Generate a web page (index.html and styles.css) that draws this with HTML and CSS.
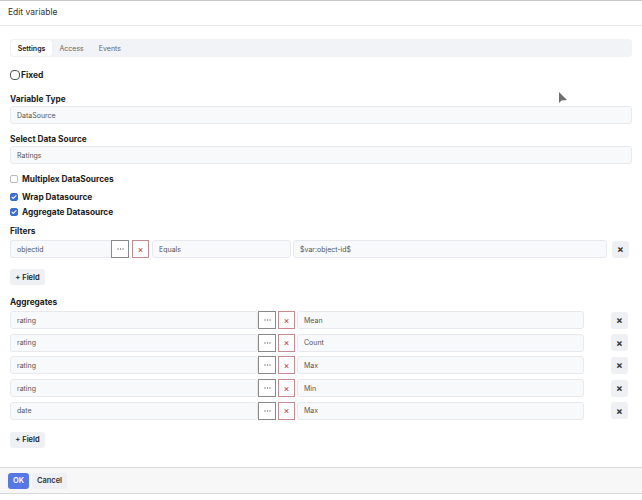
FILE: index.html
```html
<!DOCTYPE html>
<html>
<head>
<meta charset="utf-8">
<link rel="stylesheet" href="styles.css">
</head>
<body>
<div class="dialog">
  <div class="header">Edit variable</div>
  <div class="content">
    <div class="tabs">
      <div class="tab active">Settings</div>
      <div class="tab">Access</div>
      <div class="tab">Events</div>
    </div>
    <label class="fixed"><span class="radio"></span>Fixed</label>
    <div class="label l-type">Variable Type</div>
    <div class="input">DataSource</div>
    <div class="label l-src">Select Data Source</div>
    <div class="input">Ratings</div>
    <div class="check c-multi"><span class="box"></span>Multiplex DataSources</div>
    <div class="check c-wrap"><span class="box on"><svg viewBox="0 0 8 8" width="8" height="8"><path d="M2 4.2 L3.4 5.5 L6 2.6" fill="none" stroke="#fff" stroke-width="1.1" stroke-linecap="round" stroke-linejoin="round"/></svg></span>Wrap Datasource</div>
    <div class="check c-agg"><span class="box on"><svg viewBox="0 0 8 8" width="8" height="8"><path d="M2 4.2 L3.4 5.5 L6 2.6" fill="none" stroke="#fff" stroke-width="1.1" stroke-linecap="round" stroke-linejoin="round"/></svg></span>Aggregate Datasource</div>
    <div class="label l-filters">Filters</div>
    <div class="row filter-row">
      <div class="input w-f1">objectid</div>
      <div class="dots"><svg width="7" height="2" viewBox="0 0 7 2"><circle cx="1" cy="1" r="0.7" fill="#666"/><circle cx="3.5" cy="1" r="0.7" fill="#666"/><circle cx="6" cy="1" r="0.7" fill="#666"/></svg></div>
      <div class="xbtn">×</div>
      <div class="input w-f2">Equals</div>
      <div class="input w-f3">$var:object-id$</div>
      <div class="close">×</div>
    </div>
    <div class="addbtn a1">+ Field</div>
    <div class="label l-aggs">Aggregates</div>
    <div class="aggs">
      <div class="row agg-row">
        <div class="input w-a1">rating</div><div class="dots"><svg width="7" height="2" viewBox="0 0 7 2"><circle cx="1" cy="1" r="0.7" fill="#666"/><circle cx="3.5" cy="1" r="0.7" fill="#666"/><circle cx="6" cy="1" r="0.7" fill="#666"/></svg></div><div class="xbtn">×</div><div class="input w-a2">Mean</div><div class="close">×</div>
      </div>
      <div class="row agg-row">
        <div class="input w-a1">rating</div><div class="dots"><svg width="7" height="2" viewBox="0 0 7 2"><circle cx="1" cy="1" r="0.7" fill="#666"/><circle cx="3.5" cy="1" r="0.7" fill="#666"/><circle cx="6" cy="1" r="0.7" fill="#666"/></svg></div><div class="xbtn">×</div><div class="input w-a2">Count</div><div class="close">×</div>
      </div>
      <div class="row agg-row">
        <div class="input w-a1">rating</div><div class="dots"><svg width="7" height="2" viewBox="0 0 7 2"><circle cx="1" cy="1" r="0.7" fill="#666"/><circle cx="3.5" cy="1" r="0.7" fill="#666"/><circle cx="6" cy="1" r="0.7" fill="#666"/></svg></div><div class="xbtn">×</div><div class="input w-a2">Max</div><div class="close">×</div>
      </div>
      <div class="row agg-row">
        <div class="input w-a1">rating</div><div class="dots"><svg width="7" height="2" viewBox="0 0 7 2"><circle cx="1" cy="1" r="0.7" fill="#666"/><circle cx="3.5" cy="1" r="0.7" fill="#666"/><circle cx="6" cy="1" r="0.7" fill="#666"/></svg></div><div class="xbtn">×</div><div class="input w-a2">Min</div><div class="close">×</div>
      </div>
      <div class="row agg-row">
        <div class="input w-a1">date</div><div class="dots"><svg width="7" height="2" viewBox="0 0 7 2"><circle cx="1" cy="1" r="0.7" fill="#666"/><circle cx="3.5" cy="1" r="0.7" fill="#666"/><circle cx="6" cy="1" r="0.7" fill="#666"/></svg></div><div class="xbtn">×</div><div class="input w-a2">Max</div><div class="close">×</div>
      </div>
    </div>
    <div class="addbtn a2">+ Field</div>
  </div>
  <div class="footer">
    <div class="ok">OK</div>
    <div class="cancel">Cancel</div>
  </div>
</div>
<div class="cursor"><svg width="10" height="12" viewBox="0 0 10 12"><path d="M1 0 L1 11 L3.5 8.5 L9 8 Z" fill="#707070"/></svg></div>
</body>
</html>
```
FILE: styles.css
```css
* { box-sizing: border-box; }
html, body { margin: 0; padding: 0; background: #fff; }
body {
  font-family: Inter, "Noto Sans", sans-serif;
  color: #222;
  width: 642px;
  height: 500px;
  position: relative;
  overflow: hidden;
}
.dialog {
  border-top: 1px solid #c8c8c8;
  display: flex;
  flex-direction: column;
}
.header {
  height: 25px;
  border-bottom: 1px solid #e6e6e6;
  font-size: 8.5px;
  color: #333;
  padding: 6px 0 0 8px;
}
.content {
  padding: 13px 10px 0 10px;
  display: flex;
  flex-direction: column;
  height: 441px;
}
.tabs {
  display: flex;
  background: #f1f3f6;
  border-radius: 4px;
  height: 18px;
  padding: 1px;
  align-items: stretch;
}
.tab {
  font-size: 7px;
  color: #666;
  padding: 0 7.5px;
  display: flex;
  align-items: center;
}
.tab.active {
  background: #fff;
  color: #222;
  font-weight: 600;
  border-radius: 3px;
  padding: 0 7px;
  width: 41px;
  justify-content: center;
  box-shadow: 0 0 1px rgba(0,0,0,0.08);
}
.fixed {
  display: flex;
  align-items: center;
  font-size: 8.5px;
  font-weight: 700;
  margin-top: 12px;
  height: 12px;
}
.radio {
  width: 10px;
  height: 10px;
  border: 1px solid #555;
  border-radius: 4px;
  margin-right: 1px;
}
.label {
  font-size: 8.3px;
  font-weight: 700;
  color: #222;
  height: 12px;
  line-height: 12px;
}
.l-type { margin-top: 12px; margin-bottom: 1px; }
.l-src { margin-top: 9px; margin-bottom: 1px; }
.l-filters { margin-top: 7px; margin-bottom: 3px; }
.l-aggs { margin-top: 11px; margin-bottom: 3px; }
.input {
  height: 18px;
  background: #f8f9fb;
  border: 1px solid #e7e9ed;
  border-radius: 3px;
  font-size: 7px;
  color: #555;
  padding: 0 6px;
  display: flex;
  align-items: center;
}
.check {
  display: flex;
  align-items: center;
  font-size: 8.3px;
  font-weight: 700;
  height: 12px;
}
.c-multi { margin-top: 9px; }
.c-wrap { margin-top: 6px; }
.c-agg { margin-top: 3px; }
.box {
  width: 8px;
  height: 8px;
  border: 1px solid #bbb;
  border-radius: 2px;
  margin-right: 4px;
  display: flex;
  align-items: center;
  justify-content: center;
  background: #fff;
}
.box.on {
  background: #3d6ed8;
  border-color: #3d6ed8;
}
.box.on svg { flex: none; }
.row {
  display: flex;
  align-items: center;
  height: 18px;
}
.filter-row .w-f1 { width: 101px; border-right: none; border-radius: 3px 0 0 3px; }
.filter-row .xbtn { margin-left: 3px; }
.filter-row .w-f2 { width: 139px; margin-left: 3px; }
.filter-row .w-f3 { width: 314px; margin-left: 2px; }
.filter-row .close { margin-left: 5px; }
.dots {
  width: 18px;
  height: 18px;
  border: 1px solid #8a8a8a;
  background: #fff;
  display: flex;
  align-items: center;
  justify-content: center;
  flex: none;
}
.xbtn {
  width: 17px;
  height: 18px;
  border: 1px solid #c98a92;
  background: #fff;
  font-size: 9px;
  color: #b8344a;
  display: flex;
  align-items: center;
  justify-content: center;
  flex: none;
}
.close {
  width: 17px;
  height: 17px;
  background: #eef0f3;
  border-radius: 3px;
  font-size: 10px;
  font-weight: 700;
  color: #333;
  display: flex;
  align-items: center;
  justify-content: center;
  flex: none;
}
.addbtn {
  width: 35px;
  height: 16px;
  background: #eef0f3;
  border-radius: 3px;
  font-size: 7.5px;
  font-weight: 600;
  color: #222;
  display: flex;
  align-items: center;
  justify-content: center;
}
.a1 { margin-top: 11px; }
.a2 { margin-top: 12px; }
.aggs {
  display: flex;
  flex-direction: column;
  gap: 4.7px;
}
.agg-row .w-a1 { width: 248px; }
.agg-row .xbtn { margin-left: 2px; }
.agg-row .w-a2 { width: 287px; margin-left: 2px; }
.agg-row .close { margin-left: 27px; }
.footer {
  border-top: 1px solid #d8d8d8;
  border-bottom: 1px solid #d8d8d8;
  background: #f7f7f8;
  height: 27px;
  display: flex;
  align-items: center;
  padding: 0 8px;
  gap: 3px;
}
.ok {
  width: 21px;
  height: 16px;
  background: #5578e6;
  color: #fff;
  border-radius: 3px;
  font-size: 7.5px;
  font-weight: 600;
  display: flex;
  align-items: center;
  justify-content: center;
}
.cancel {
  width: 35px;
  height: 16px;
  background: #eef0f4;
  color: #333;
  border-radius: 3px;
  font-size: 7.5px;
  font-weight: 600;
  display: flex;
  align-items: center;
  justify-content: center;
}
.cursor {
  position: absolute;
  left: 558px;
  top: 88px;
}
```
